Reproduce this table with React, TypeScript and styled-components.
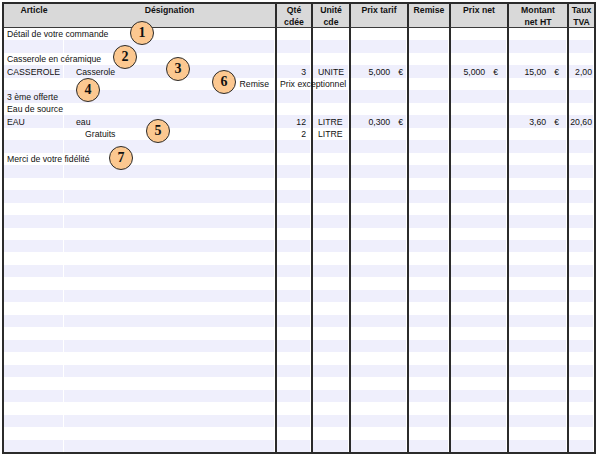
import React from "react";
import styled, { createGlobalStyle } from "styled-components";

const Global = createGlobalStyle`
  html, body { margin: 0; padding: 0; background: #ffffff; }
  body { font-family: "Liberation Sans", Arial, sans-serif; }
`;

const LINE = "#2b2b2b";
const STRIPE = "#efeffc";

const Sheet = styled.div`
  position: relative;
  margin: 2px;
  width: 594px;
  height: 452px;
  box-sizing: border-box;
  border: 2px solid ${LINE};
  display: grid;
  grid-template-columns: 60px 211px 36px 38px 58px 42px 58px 60px 27px;
  grid-template-rows: 24px repeat(34, 1fr);
  overflow: hidden;
  font-family: "Liberation Sans", Arial, sans-serif;
  font-size: 8.7px;
  color: #111;
`;

const HeadCell = styled.div<{ $line?: boolean }>`
  box-sizing: border-box;
  background: #d9d9d9;
  border-bottom: 1px solid #3a3a3a;
  border-left: ${(p) => (p.$line ? `2px solid ${LINE}` : "none")};
  padding-top: 1px;
  text-align: center;
  font-weight: bold;
  line-height: 11.5px;
  white-space: nowrap;
`;

const Cell = styled.div<{
  $line?: boolean;
  $stripe?: boolean;
  $span?: number;
  $align?: "left" | "right";
  $padL?: number;
  $padR?: number;
  $top?: boolean;
}>`
  box-sizing: border-box;
  min-width: 0;
  grid-column: ${(p) => (p.$span ? `span ${p.$span}` : "auto")};
  border-left: ${(p) => (p.$line ? `2px solid ${LINE}` : "none")};
  background: ${(p) => (p.$stripe ? STRIPE : "#ffffff")};
  box-shadow: ${(p) => (p.$stripe ? "inset -1px 0 0 #ffffff" : "none")};
  display: flex;
  align-items: center;
  justify-content: ${(p) => (p.$align === "right" ? "flex-end" : "flex-start")};
  padding-left: ${(p) => p.$padL ?? 3}px;
  padding-right: ${(p) => p.$padR ?? 3}px;
  white-space: nowrap;
  overflow: visible;
  position: ${(p) => (p.$top ? "relative" : "static")};
  z-index: ${(p) => (p.$top ? 1 : "auto")};
`;

const Euro = styled.span`
  margin-left: 8px;
`;

const Badge = styled.div<{ $x: number; $y: number }>`
  position: absolute;
  left: ${(p) => p.$x - 12 - 4}px;
  top: ${(p) => p.$y - 12 - 4}px;
  width: 24px;
  height: 24px;
  box-sizing: border-box;
  border-radius: 50%;
  background: #fcc890;
  border: 1.3px solid #2a2a2a;
  display: flex;
  align-items: center;
  justify-content: center;
  font-family: "Liberation Serif", "Times New Roman", serif;
  font-weight: bold;
  font-size: 14px;
  color: #111;
  z-index: 2;
`;

type RowData = {
  lead?: string;
  article?: string;
  designation?: string;
  desigPad?: number;
  desigRight?: boolean;
  qte?: string;
  note?: string;
  unite?: string;
  tarif?: string;
  net?: string;
  montant?: string;
  tva?: string;
};

const rows: RowData[] = [
  { lead: "Détail de votre commande" },
  {},
  { lead: "Casserole en céramique" },
  {
    article: "CASSEROLE",
    designation: "Casserole",
    qte: "3",
    unite: "UNITE",
    tarif: "5,000",
    net: "5,000",
    montant: "15,00",
    tva: "2,00",
  },
  { designation: "Remise", desigRight: true, note: "Prix exceptionnel" },
  { lead: "3 ème offerte" },
  { lead: "Eau de source" },
  {
    article: "EAU",
    designation: "eau",
    qte: "12",
    unite: "LITRE",
    tarif: "0,300",
    montant: "3,60",
    tva: "20,60",
  },
  { designation: "Gratuits", desigPad: 21, qte: "2", unite: "LITRE" },
  {},
  { lead: "Merci de votre fidélité" },
];

while (rows.length < 34) rows.push({});

const headers: { label: React.ReactNode; line: boolean }[] = [
  { label: "Article", line: false },
  { label: "Désignation", line: false },
  { label: <>Qté<br />cdée</>, line: true },
  { label: <>Unité<br />cde</>, line: true },
  { label: "Prix tarif", line: true },
  { label: "Remise", line: true },
  { label: "Prix net", line: true },
  { label: <>Montant<br />net HT</>, line: true },
  { label: <>Taux<br />TVA</>, line: true },
];

const badges = [
  { n: 1, x: 142, y: 33 },
  { n: 2, x: 125, y: 57 },
  { n: 3, x: 178, y: 69 },
  { n: 4, x: 88, y: 90 },
  { n: 5, x: 158, y: 131 },
  { n: 6, x: 224, y: 82 },
  { n: 7, x: 121, y: 158 },
];

function MoneyText({ value }: { value?: string }) {
  if (!value) return null;
  return (
    <>
      {value}
      <Euro>€</Euro>
    </>
  );
}

function BodyRow({ r, i }: { r: RowData; i: number }) {
  const s = i % 2 === 1;
  return (
    <>
      {r.lead ? (
        <Cell $stripe={s} $span={2}>{r.lead}</Cell>
      ) : (
        <>
          <Cell $stripe={s}>{r.article}</Cell>
          <Cell
            $stripe={s}
            $align={r.desigRight ? "right" : "left"}
            $padL={r.desigPad ?? 12}
            $padR={6}
          >
            {r.designation}
          </Cell>
        </>
      )}
      <Cell
        $line
        $stripe={s}
        $align={r.note ? "left" : "right"}
        $padL={3}
        $padR={5}
        $top={!!r.note}
      >
        {r.note ?? r.qte}
      </Cell>
      <Cell $line $stripe={s} $padL={5}>{r.unite}</Cell>
      <Cell $line $stripe={s} $align="right" $padR={4}>
        <MoneyText value={r.tarif} />
      </Cell>
      <Cell $line $stripe={s} />
      <Cell $line $stripe={s} $align="right" $padR={9}>
        <MoneyText value={r.net} />
      </Cell>
      <Cell $line $stripe={s} $align="right" $padR={8}>
        <MoneyText value={r.montant} />
      </Cell>
      <Cell $line $stripe={s} $align="right" $padL={0} $padR={2}>
        {r.tva}
      </Cell>
    </>
  );
}

export default function App() {
  return (
    <>
      <Global />
      <Sheet>
        {headers.map((h, i) => (
          <HeadCell key={i} $line={h.line}>
            {h.label}
          </HeadCell>
        ))}
        {rows.map((r, i) => (
          <BodyRow key={i} r={r} i={i} />
        ))}
        {badges.map((b) => (
          <Badge key={b.n} $x={b.x} $y={b.y}>
            {b.n}
          </Badge>
        ))}
      </Sheet>
    </>
  );
}
